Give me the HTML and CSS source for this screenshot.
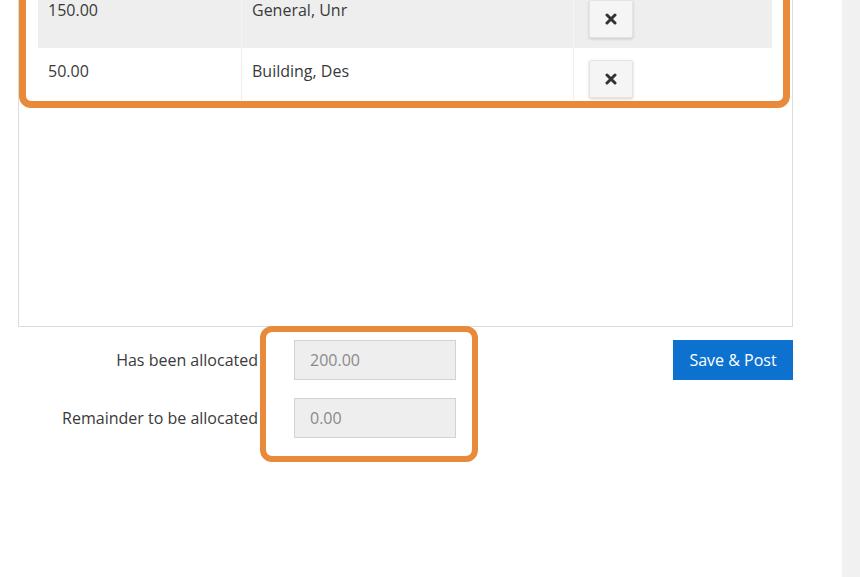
FILE: index.html
```html
<!DOCTYPE html>
<html>
<head>
<meta charset="utf-8">
<link rel="stylesheet" href="styles.css">
</head>
<body>
<div class="page">
  <div class="main">
    <div class="panel">
      <table class="alloc">
        <tr class="row-grey">
          <td class="c-amt">150.00</td>
          <td class="c-fund">General, Unr</td>
          <td class="c-act"><button class="del" aria-label="remove"><svg width="12" height="12" viewBox="0 0 12 12"><path d="M2 2 L10 10 M10 2 L2 10" stroke="#333" stroke-width="3" stroke-linecap="round"/></svg></button></td>
        </tr>
        <tr class="row-white">
          <td class="c-amt">50.00</td>
          <td class="c-fund">Building, Des</td>
          <td class="c-act"><button class="del" aria-label="remove"><svg width="12" height="12" viewBox="0 0 12 12"><path d="M2 2 L10 10 M10 2 L2 10" stroke="#333" stroke-width="3" stroke-linecap="round"/></svg></button></td>
        </tr>
      </table>
    </div>
    <div class="totals">
      <div class="fields">
        <label class="lbl">Has been allocated</label>
        <div class="field">200.00</div>
        <label class="lbl">Remainder to be allocated</label>
        <div class="field">0.00</div>
      </div>
      <button class="save">Save &amp; Post</button>
    </div>
  </div>
  <div class="scrollbar"></div>
  <div class="hl hl-table"></div>
  <div class="hl hl-fields"></div>
</div>
</body>
</html>
```
FILE: styles.css
```css
html, body {
  margin: 0;
  padding: 0;
  background: #fff;
  overflow: hidden;
}
.page {
  position: relative;
  display: flex;
  width: 860px;
  height: 577px;
  font-family: "Open Sans", "Liberation Sans", sans-serif;
  font-size: 16px;
  color: #3a3a3a;
}
.main {
  flex: 1;
  padding-left: 18px;
}
.scrollbar {
  width: 18px;
  background: #f1f1f1;
}
.panel {
  width: 735px;
  margin-top: -13px;
  height: 339px;
  border: 1px solid #dcdcdc;
  border-top: none;
  padding: 0 19px;
}
.alloc {
  width: 734px;
  border-collapse: collapse;
}
.alloc td {
  padding: 0;
  vertical-align: top;
}
.row-grey { background: #eeeeee; height: 61px; }
.row-white { background: #fff; height: 52px; }
.row-grey td { padding-top: 12px; }
.row-white td { padding-top: 12px; }
.c-amt { width: 193px; padding-left: 10px !important; border-right: 1px solid #f4f4f4; }
.c-fund { width: 321px; padding-left: 10px !important; border-right: 1px solid #f4f4f4; }
.row-white .c-amt, .row-white .c-fund { border-right-color: #eeeeee; }
.c-act { padding-left: 15px !important; }
.row-grey .c-act { padding-top: 13px !important; }
.row-white .c-act { padding-top: 12px !important; }
.del {
  display: flex;
  align-items: center;
  justify-content: center;
  width: 44px;
  height: 38px;
  padding: 0;
  background: #f5f5f5;
  border: 1px solid #e4e4e4;
  border-radius: 2px;
  box-shadow: 0 1px 3px rgba(0,0,0,0.18);
}
.totals {
  display: flex;
  justify-content: space-between;
  align-items: flex-start;
  width: 775px;
  margin-top: 13px;
}
.fields {
  display: grid;
  grid-template-columns: 240px 162px;
  column-gap: 36px;
  row-gap: 18px;
  align-items: center;
}
.lbl {
  text-align: right;
  color: #3a3a3a;
}
.field {
  box-sizing: border-box;
  height: 40px;
  line-height: 38px;
  padding-left: 15px;
  background: #eeeeee;
  border: 1px solid #d2d2d2;
  color: #8a8a8a;
}
.save {
  width: 120px;
  height: 40px;
  background: #0d72cf;
  color: #fff;
  border: none;
  font-family: "Open Sans", "Liberation Sans", sans-serif;
  font-size: 16px;
  padding: 0;
}
.hl {
  position: absolute;
  box-sizing: border-box;
  border: 7px solid #e98a3a;
  border-radius: 12px;
}
.hl-table {
  left: 19px;
  top: -30px;
  width: 771px;
  height: 138px;
}
.hl-fields {
  left: 260px;
  top: 326px;
  width: 218px;
  height: 136px;
  border-width: 6.5px;
}
```
